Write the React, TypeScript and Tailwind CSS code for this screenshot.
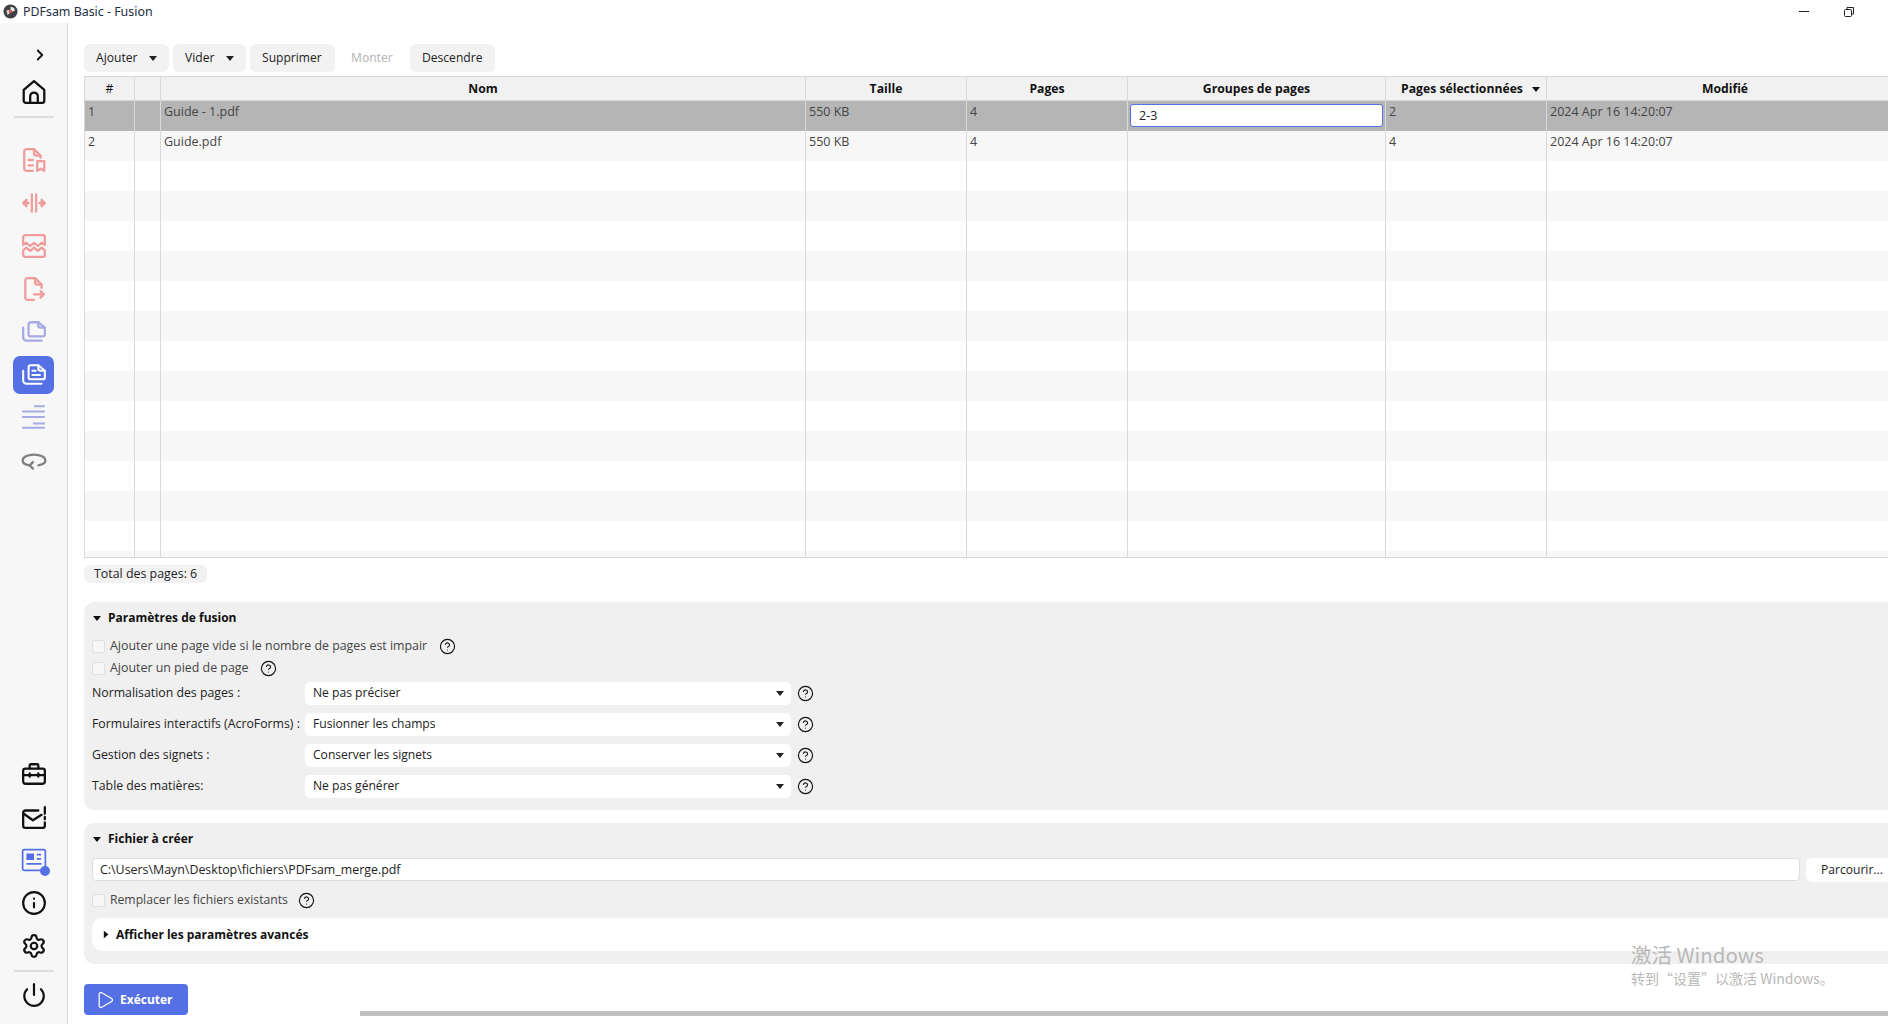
import { ChevronRight, CircleHelp, Info, Play, Power, Settings } from "lucide-react"

const columns = [
  { name: "#", w: "w-[50px]" },
  { name: "", w: "w-[26px]" },
  { name: "Nom", w: "w-[645px]" },
  { name: "Taille", w: "w-[161px]" },
  { name: "Pages", w: "w-[161px]" },
  { name: "Groupes de pages", w: "w-[258px]" },
  { name: "Pages sélectionnées", w: "w-[161px]" },
  { name: "Modifié", w: "w-[356px]" },
]

const rows = [
  ["1", "", "Guide - 1.pdf", "550 KB", "4", "", "2", "2024 Apr 16 14:20:07"],
  ["2", "", "Guide.pdf", "550 KB", "4", "", "4", "2024 Apr 16 14:20:07"],
  ...Array.from({ length: 14 }, () => ["", "", "", "", "", "", "", ""]),
]

const selects = [
  ["Normalisation des pages :", "Ne pas préciser"],
  ["Formulaires interactifs (AcroForms) :", "Fusionner les champs"],
  ["Gestion des signets :", "Conserver les signets"],
  ["Table des matières:", "Ne pas générer"],
]

function Caret({ className = "" }: { className?: string }) {
  return (
    <svg viewBox="0 0 10 6" className={`w-[8px] h-[5px] fill-current ${className}`}>
      <path d="M0 0h10L5 6z" />
    </svg>
  )
}

function Help() {
  return <CircleHelp size={17} strokeWidth={1.6} className="text-[#111] shrink-0" />
}

function Check({ label, labelSize = "text-[12.4px]", helpGap = "ml-2" }: { label: string; labelSize?: string; helpGap?: string }) {
  return (
    <div className="flex items-center h-[18px]">
      <span className="w-[13px] h-[13px] rounded-[2px] border border-[#e0e0e0] bg-[#f7f7f7]" />
      <span className={`ml-[5px] text-[#444] ${labelSize}`}>{label}</span>
      <span className={helpGap}>
        <Help />
      </span>
    </div>
  )
}

function NavIcon({ children, color, active }: { children: React.ReactNode; color: string; active?: boolean }) {
  return (
    <svg
      viewBox="0 0 24 24"
      fill="none"
      stroke="currentColor"
      strokeWidth={active ? 1.9 : 2.1}
      strokeLinecap="round"
      strokeLinejoin="round"
      className={`w-[26px] h-[26px] ${color}`}
    >
      {children}
    </svg>
  )
}

function Sidebar() {
  const red = "text-[#f09c9c]"
  const purple = "text-[#a8aae4]"
  const dark = "text-[#111]"
  return (
    <aside className="w-[68px] shrink-0 bg-[#f7f7f7] border-r border-[#d9d9d9] flex flex-col items-center">
      <ChevronRight size={18} strokeWidth={2.4} className="text-[#111] mt-[23px] ml-[12px]" />
      <div className="mt-[15px]">
        <NavIcon color={dark}>
          <path d="M2.500 10 12 2l9.500 8v10a2 2 0 0 1-2 2h-15a2 2 0 0 1-2-2z" />
          <path d="M8.500 22v-6a3.500 3.500 0 0 1 7 0v6" />
        </NavIcon>
      </div>
      <div className="w-[40px] h-[2px] bg-[#dedede] mt-[11px]" />
      <div className="mt-[29px] flex flex-col items-center gap-[17px]">
        <NavIcon color={red}>
          <path d="M11 22H5a2 2 0 0 1-2-2V4a2 2 0 0 1 2-2h7l6 6v2" />
          <path d="M12 2v4a2 2 0 0 0 2 2h4" />
          <path d="M7 12h4M7 17h4" />
          <path d="M15 13h6.500v9l-3.250-2-3.250 2z" />
        </NavIcon>
        <NavIcon color={red}>
          <path d="M10 4v16M14 4v16M7 12H3M17 12h4" />
          <path d="M5 9l-3 3 3 3zM19 9l3 3-3 3z" fill="currentColor" />
        </NavIcon>
        <NavIcon color={red}>
          <path d="M2 11V4a2 2 0 0 1 2-2h16a2 2 0 0 1 2 2v7l-3-2-3.500 3L12 9l-3.500 3L5 9z" />
          <path d="M2 16l3-2.500 3.500 3 3.500-3 3.500 3 3.500-3 3 2.500v4a2 2 0 0 1-2 2H4a2 2 0 0 1-2-2z" />
        </NavIcon>
        <NavIcon color={red}>
          <path d="M12 22H6a2 2 0 0 1-2-2V4a2 2 0 0 1 2-2h7l6 6v3" />
          <path d="M13 2v4a2 2 0 0 0 2 2h4" />
          <path d="M12 17h9M18 14l3 3-3 3" />
        </NavIcon>
        <NavIcon color={purple}>
          <path d="M9 3h7l6 5v6a2 2 0 0 1-2 2H9a2 2 0 0 1-2-2V5a2 2 0 0 1 2-2z" />
          <path d="M16 3v3a2 2 0 0 0 2 2h4" />
          <path d="M2 8v9a3 3 0 0 0 3 3h14" />
        </NavIcon>
      </div>
      <div className="mt-[11px] w-[41px] h-[38px] rounded-[7px] bg-[#5470e4] flex items-center justify-center">
        <NavIcon color="text-white" active>
          <path d="M9 3h7l6 5v6a2 2 0 0 1-2 2H9a2 2 0 0 1-2-2V5a2 2 0 0 1 2-2z" />
          <path d="M16 3v3a2 2 0 0 0 2 2h4" />
          <path d="M2 8v9a3 3 0 0 0 3 3h14" />
          <path d="M10.500 8h3M10.500 12h7" />
        </NavIcon>
      </div>
      <div className="mt-[10px] flex flex-col items-center gap-[17px]">
        <NavIcon color={purple}>
          <path d="M12 2h10M1 7h21M1 12h21M11 18h11M1 22h21" strokeWidth={1.8} strokeLinecap="butt" />
        </NavIcon>
        <NavIcon color="text-[#808080]">
          <path d="M8 17c-4-.6-6.500-2.400-6.500-4.500C1.500 9.500 6 7 12 7s10.500 2.500 10.500 5.500c0 2-2.500 3.800-6.500 4.400" />
          <path d="M11 14l-3 3 3 3" />
        </NavIcon>
      </div>
      <div className="flex-1" />
      <div className="flex flex-col items-center gap-[17px]">
        <NavIcon color={dark}>
          <rect x="2" y="7" width="20" height="14" rx="2" />
          <path d="M8 7V4a1 1 0 0 1 1-1h6a1 1 0 0 1 1 1v3" />
          <path d="M2 13h20M8 11.500v3M16 11.500v3" />
        </NavIcon>
        <NavIcon color={dark}>
          <path d="M16 6H4a2 2 0 0 0-2 2v12a2 2 0 0 0 2 2h16a2 2 0 0 0 2-2v-3" />
          <path d="M2.500 9 11 15l8-5" />
          <path d="M22 3v6M22 12v2" />
        </NavIcon>
        <div className="relative">
          <NavIcon color="text-[#5470e4]">
            <rect x="1.500" y="2.500" width="21" height="19" rx="1.500" strokeWidth={1.6} />
            <rect x="5" y="6" width="7" height="6" fill="currentColor" stroke="none" />
            <path d="M14.500 7h4M14.500 11h4M5 15.500h14" strokeWidth={1.6} strokeLinecap="butt" />
          </NavIcon>
          <span className="absolute right-[-3px] bottom-[-3px] w-[10px] h-[10px] rounded-full bg-[#5470e4]" />
        </div>
        <Info size={26} strokeWidth={2} className={dark} />
        <Settings size={26} strokeWidth={2} className={dark} />
      </div>
      <div className="w-[40px] h-[2px] bg-[#dedede] mt-[11px]" />
      <Power size={26} strokeWidth={2} className="text-[#111] mt-[10px] mb-[16px]" />
    </aside>
  )
}

function ToolButton({ label, w, caret, disabled }: { label: string; w: string; caret?: boolean; disabled?: boolean }) {
  return (
    <button
      className={`${w} h-[28px] rounded-[6px] flex items-center justify-between px-[12px] text-[12.1px] ${disabled ? "text-[#b4b4b4]" : "bg-[#f2f2f2] text-[#222]"}`}
    >
      <span>{label}</span>
      {caret && <Caret className="text-[#222]" />}
    </button>
  )
}

function FileTable() {
  return (
    <div className="mt-[4px] h-[482px] overflow-hidden border-t border-l border-b border-[#d9d9d9] flex flex-col">
      <div className="flex h-[24px] shrink-0 bg-[#f1f1f1] border-b border-[#d9d9d9] font-bold text-[#111] text-[12.2px]">
        {columns.map((c) => (
          <div
            key={c.name}
            className={`${c.w} shrink-0 relative flex items-center justify-center pt-[2px] border-r border-[#d9d9d9] last:border-r-0 ${c.name === "#" ? "font-normal" : ""} ${c.name === "Pages sélectionnées" ? "pr-[8px]" : ""}`}
          >
            {c.name}
            {c.name === "Pages sélectionnées" && <Caret className="absolute right-[6px] text-[#111]" />}
          </div>
        ))}
      </div>
      {rows.map((r, i) => (
        <div
          key={i}
          className={`flex h-[30px] shrink-0 text-[#444] text-[12.5px] ${i === 0 ? "bg-[#b5b5b5]" : i % 2 === 1 ? "bg-[#f7f7f7]" : "bg-white"}`}
        >
          {columns.map((c, j) => (
            <div key={j} className={`${c.w} shrink-0 border-r border-[#d9d9d9] last:border-r-0 px-[3px] pt-[2px] leading-[18px]`}>
              {i === 0 && j === 5 ? (
                <div className="mt-[1px] h-[23px] -ml-[1px] mr-[-1px] rounded-[3px] border-[1.500px] border-[#5470e4] bg-white px-[8px] flex items-center text-[#222]">
                  2-3
                </div>
              ) : (
                r[j]
              )}
            </div>
          ))}
        </div>
      ))}
    </div>
  )
}

export default function App() {
  return (
    <div className="relative w-[1888px] h-[1024px] overflow-hidden bg-white flex flex-col font-['Open_Sans','Noto_Sans_CJK_SC',sans-serif] text-[12.3px] text-[#222]">
      {/* window title bar */}
      <div className="h-[23px] shrink-0 flex items-center pl-[3px] pr-[34px]">
        <svg viewBox="0 0 16 16" className="w-[15px] h-[15px]">
          <circle cx="8" cy="8" r="7.500" fill="#3f3f44" />
          <path d="M8 3a5 5 0 0 1 4.800 3.800L9.800 8.200 8 5.500z" fill="#e8e8e8" />
          <path d="M5 12 3.500 7l3.200-1 1 3z" fill="#d9d9d9" />
          <circle cx="8" cy="8" r="1.800" fill="#d9534f" />
        </svg>
        <span className="ml-[5px] pt-[2px] font-['Noto_Sans','Open_Sans',sans-serif] text-[12.4px] text-[#1c2c44]">PDFsam Basic - Fusion</span>
        <div className="flex-1" />
        <div className="w-[10px] h-[1px] bg-[#222]" />
        <svg viewBox="0 0 10 10" className="ml-[35px] w-[10px] h-[10px] fill-none stroke-[#222]">
          <path d="M3 2.500V.500h6.500v6.500H7.500" />
          <rect x=".500" y="2.500" width="7" height="7" rx="1" />
        </svg>
      </div>

      <div className="flex-1 flex min-h-0">
        <Sidebar />

        <main className="flex-1 min-w-0 pl-[16px] pt-[21px]">
          <div className="flex gap-[4px]">
            <ToolButton label="Ajouter" w="w-[85px]" caret />
            <ToolButton label="Vider" w="w-[73px]" caret />
            <ToolButton label="Supprimer" w="w-[85px]" />
            <ToolButton label="Monter" w="w-[67px]" disabled />
            <ToolButton label="Descendre" w="w-[85px]" />
          </div>

          <FileTable />

          <div className="mt-[7px] w-[123px] h-[18px] rounded-[6px] bg-[#f2f2f2] flex items-center pl-[10px] text-[12.4px]">Total des pages: 6</div>

          <section className="mt-[19px] h-[208px] rounded-l-[10px] bg-[#f0f0f0] pl-[8px] pt-[8px]">
            <div className="flex items-center h-[16px] font-bold text-[12px] text-[#111] pl-[1px]">
              <Caret />
              <span className="ml-[7px]">Paramètres de fusion</span>
            </div>
            <div className="mt-[11px] flex flex-col gap-[4px]">
              <Check label="Ajouter une page vide si le nombre de pages est impair" helpGap="ml-[12px]" />
              <Check label="Ajouter un pied de page" helpGap="ml-[12px]" />
            </div>
            <div className="mt-[5px] flex flex-col gap-[8px]">
              {selects.map(([label, value]) => (
                <div key={label} className="flex items-center h-[23px]">
                  <span className="w-[213px] shrink-0 whitespace-nowrap">{label}</span>
                  <div className="w-[486px] h-[23px] rounded-[5px] bg-white flex items-center justify-between pl-[8px] pr-[7px] text-[12.1px]">
                    <span>{value}</span>
                    <Caret />
                  </div>
                  <span className="ml-[6px]">
                    <Help />
                  </span>
                </div>
              ))}
            </div>
          </section>

          <section className="mt-[13px] h-[141px] rounded-l-[10px] bg-[#f0f0f0] pl-[8px] pt-[8px]">
            <div className="flex items-center h-[16px] font-bold text-[12px] text-[#111] pl-[1px]">
              <Caret />
              <span className="ml-[7px]">Fichier à créer</span>
            </div>
            <div className="mt-[11px] flex gap-[6px]">
              <div className="w-[1708px] h-[23px] rounded-[4px] border border-[#dddddd] bg-white flex items-center pl-[7px] pt-[1px] text-[12.4px]">
                {"C:\\Users\\Mayn\\Desktop\\fichiers\\PDFsam_merge.pdf"}
              </div>
              <button className="flex-1 h-[24px] rounded-l-[6px] bg-white text-left pl-[15px] text-[12.1px]">Parcourir...</button>
            </div>
            <div className="mt-[9px]">
              <Check label="Remplacer les fichiers existants" labelSize="text-[12.2px]" helpGap="ml-[10px]" />
            </div>
            <div className="mt-[9px] h-[33px] rounded-l-[10px] bg-white flex items-center pl-[10px] font-bold text-[12px] text-[#111]">
              <Caret className="-rotate-90" />
              <span className="ml-[6px]">Afficher les paramètres avancés</span>
            </div>
          </section>

          <button className="mt-[20px] w-[104px] h-[31px] rounded-[4px] bg-[#5470e4] text-white font-bold text-[12px] flex items-center pl-[11px]">
            <Play size={20} strokeWidth={1.5} />
            <span className="ml-[5px]">Exécuter</span>
          </button>
        </main>
      </div>

      {/* horizontal scroll thumb */}
      <div className="absolute left-[360px] right-0 top-[1011px] h-[5px] bg-[#c0c0c0]" />

      {/* Windows activation watermark */}
      <div className="absolute left-[1631px] top-[941px] text-[#b8b8b8] font-['Noto_Sans_CJK_SC','Noto_Sans',sans-serif] pointer-events-none">
        <div className="text-[20.500px] leading-[26px]">激活 Windows</div>
        <div className="text-[14px] leading-[20px] mt-[1px]">转到“设置”以激活 Windows。</div>
      </div>
    </div>
  )
}
